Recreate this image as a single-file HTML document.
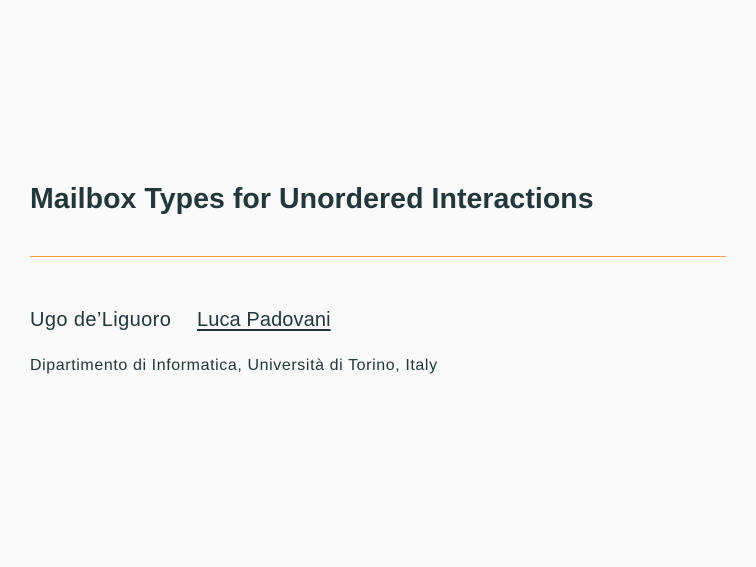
<!DOCTYPE html>
<html><head><meta charset="utf-8"><style>
html,body{margin:0;padding:0;}
body{width:756px;height:567px;background:#fafafa;position:relative;overflow:hidden;font-family:"Liberation Sans",sans-serif;color:#23373b;}
.t{position:absolute;left:30px;top:183px;font-size:28.5px;font-weight:bold;letter-spacing:0.05px;white-space:nowrap;}
.l{position:absolute;left:30px;top:256px;width:696px;height:1px;background:#f0a04b;}
.a{position:absolute;left:30px;top:309px;font-size:20px;white-space:nowrap;letter-spacing:0.4px;}
.a u{position:absolute;left:167px;top:0;letter-spacing:0.1px;text-decoration:underline;text-underline-offset:3px;}
.f{position:absolute;left:30px;top:357px;font-size:16px;white-space:nowrap;letter-spacing:0.6px;}
</style></head><body>
<div class="t">Mailbox Types for Unordered Interactions</div>
<div class="l"></div>
<div class="a">Ugo de’Liguoro<u>Luca Padovani</u></div>
<div class="f">Dipartimento di Informatica, Università di Torino, Italy</div>
</body></html>
